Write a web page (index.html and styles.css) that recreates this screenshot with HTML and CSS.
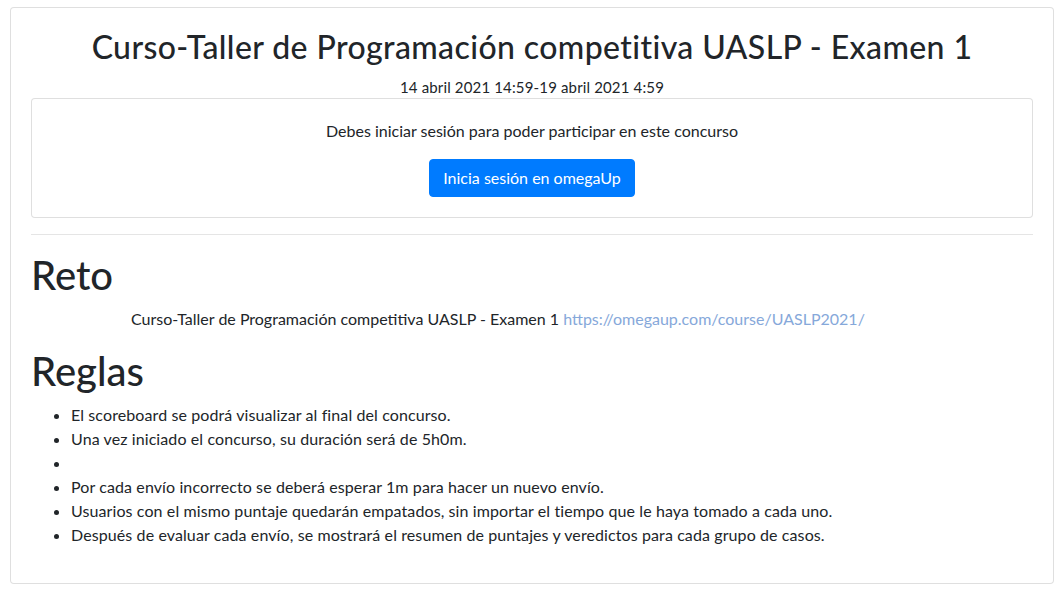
FILE: index.html
```html
<!DOCTYPE html>
<html lang="es">
<head>
<meta charset="utf-8">
<title>Curso-Taller de Programación competitiva UASLP - Examen 1</title>
<link rel="stylesheet" href="styles.css">
</head>
<body>
<div class="card main">
  <div class="intro">
    <h1 class="title">Curso-Taller de Programación competitiva UASLP - Examen 1</h1>
    <div class="dates">14 abril 2021 14:59-19 abril 2021 4:59</div>
  </div>
  <div class="card login">
    <p class="login-text">Debes iniciar sesión para poder participar en este concurso</p>
    <a class="btn" href="#">Inicia sesión en omegaUp</a>
  </div>
  <hr class="sep">
  <h1 class="section">Reto</h1>
  <p class="desc">Curso-Taller de Programación competitiva UASLP - Examen 1 <a class="link" href="#">https://omegaup.com/course/UASLP2021/</a></p>
  <h1 class="section">Reglas</h1>
  <ul class="rules">
    <li>El scoreboard se podrá visualizar al final del concurso.</li>
    <li>Una vez iniciado el concurso, su duración será de 5h0m.</li>
    <li></li>
    <li>Por cada envío incorrecto se deberá esperar 1m para hacer un nuevo envío.</li>
    <li>Usuarios con el mismo puntaje quedarán empatados, sin importar el tiempo que le haya tomado a cada uno.</li>
    <li>Después de evaluar cada envío, se mostrará el resumen de puntajes y veredictos para cada grupo de casos.</li>
  </ul>
</div>
</body>
</html>
```
FILE: styles.css
```css
* { box-sizing: border-box; }
body {
  margin: 7px 6px 0 10px;
  font-family: "Lato", "Noto Sans", sans-serif;
  font-size: 16px;
  line-height: 1.5;
  color: #212529;
  background: #fff;
}
.card {
  border: 1px solid rgba(0, 0, 0, 0.125);
  border-radius: 4px;
  background: #fff;
}
.main { padding: 20px; }
.intro { text-align: center; }
.title {
  margin: 0 0 10px;
  font-size: 32px;
  font-weight: 500;
  line-height: 1.2;
  letter-spacing: 0.4px;
}
.dates {
  font-size: 15px;
  line-height: 22px;
  letter-spacing: 0.15px;
}
.login {
  padding: 20px;
  text-align: center;
}
.login-text { margin: 0 0 16px; }
.btn {
  display: inline-block;
  padding: 6px 13px;
  border: 1px solid #007bff;
  border-radius: 4px;
  background: #007bff;
  color: #fff;
  text-decoration: none;
  line-height: 24px;
}
.sep {
  margin: 16px 0;
  border: 0;
  border-top: 1px solid rgba(0, 0, 0, 0.1);
}
.section {
  margin: 0 0 8px;
  font-size: 40px;
  font-weight: 500;
  line-height: 48px;
}
.desc { margin: 0 0 16px 100px; }
.link { color: #86a8da; text-decoration: none; }
.rules { margin: 0 0 16px; padding-left: 40px; }
.rules li { min-height: 24px; letter-spacing: 0.1px; }
```
